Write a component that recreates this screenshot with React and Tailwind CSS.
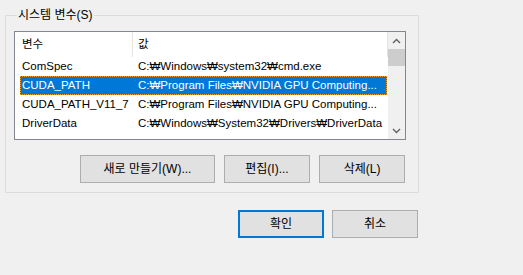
import React from 'react';

const rows = [
    { name: 'ComSpec', value: 'C:₩Windows₩system32₩cmd.exe' },
    { name: 'CUDA_PATH', value: 'C:₩Program Files₩NVIDIA GPU Computing...', selected: true },
    { name: 'CUDA_PATH_V11_7', value: 'C:₩Program Files₩NVIDIA GPU Computing...' },
    { name: 'DriverData', value: 'C:₩Windows₩System32₩Drivers₩DriverData' },
];

const Chevron = ({ up }) => (
    <svg width="9" height="6" viewBox="0 0 9 6" className="block">
        <path
            d={up ? 'M1 5 L4.5 1.5 L8 5' : 'M1 1 L4.5 4.5 L8 1'}
            fill="none"
            stroke="#606060"
            strokeWidth="1.4"
        />
    </svg>
);

const Button = ({ children, width = 'w-[86px]', primary }) => (
    <button
        className={`${width} h-[28px] bg-[#e1e1e1] text-black ${primary ? 'border-2 border-[#0078d7]' : 'border border-[#adadad]'}`}
    >
        {children}
    </button>
);

const App = () => {
    return (
        <div
            className="w-[523px] h-[275px] bg-[#f0f0f0] text-[12px] text-black overflow-hidden"
            style={{ fontFamily: '"Liberation Sans", "Noto Sans CJK KR", sans-serif' }}
        >
            <fieldset className="ml-[5px] mt-[7px] w-[413px] h-[186px] border border-[#dcdcdc] pl-[8px] pr-[12px]">
                <legend className="ml-[3px] px-[1px] leading-[16px]">시스템 변수(S)</legend>

                {/* list view */}
                <div className="mt-[8px] w-[392px] h-[109px] border border-[#828790] bg-white flex text-[11.5px]">
                    <div className="w-[373px] flex flex-col">
                        <div className="h-[25px] flex items-center">
                            <div className="w-[117px] pl-[7px]">변수</div>
                            <div className="w-px h-full bg-[#e5e5e5]" />
                            <div className="flex-1 pl-[5px]">값</div>
                            <div className="w-px h-full bg-[#e5e5e5]" />
                        </div>
                        <div className="pl-[5px] pr-[1px]">
                            {rows.map((row) => (
                                <div
                                    key={row.name}
                                    className={`h-[19px] flex items-center whitespace-nowrap ${row.selected ? 'bg-[#0078d7] text-white outline-1 outline-dotted outline-[#f0a030] -outline-offset-1' : ''}`}
                                >
                                    <div className="w-[118px] pl-[2px]">{row.name}</div>
                                    <div className="flex-1 overflow-hidden">{row.value}</div>
                                </div>
                            ))}
                        </div>
                    </div>

                    {/* scrollbar */}
                    <div className="w-[17px] bg-[#f0f0f0] flex flex-col">
                        <div className="h-[17px] flex items-center justify-center">
                            <Chevron up />
                        </div>
                        <div className="h-[17px] bg-[#cdcdcd]" />
                        <div className="flex-1" />
                        <div className="h-[17px] flex items-center justify-center">
                            <Chevron />
                        </div>
                    </div>
                </div>

                <div className="mt-[15px] flex justify-end gap-[9px] pr-[1px]">
                    <Button width="w-[135px]">새로 만들기(W)...</Button>
                    <Button>편집(I)...</Button>
                    <Button>삭제(L)</Button>
                </div>
            </fieldset>

            <div className="mt-[17px] w-[418px] flex justify-end gap-[8px]">
                <Button primary>확인</Button>
                <Button>취소</Button>
            </div>
        </div>
    );
};

export default App;
